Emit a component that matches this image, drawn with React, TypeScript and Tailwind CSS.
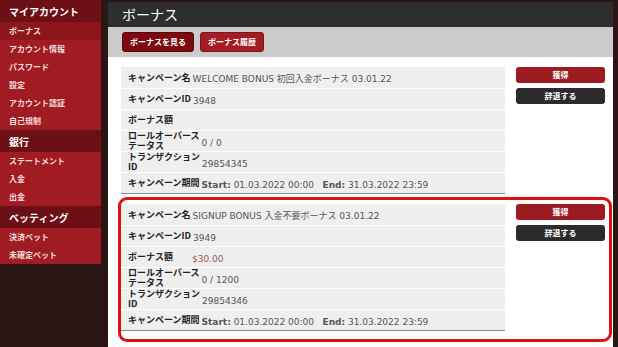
import React from 'react'

type Row = { label: React.ReactNode; value: React.ReactNode }

const jp = "font-['Noto_Sans_CJK_JP',sans-serif]"
const val = "font-['DejaVu_Sans','Noto_Sans_CJK_JP',sans-serif]"

const sideGroups = [
  { title: 'マイアカウント', items: ['ボーナス', 'アカウント情報', 'パスワード', '設定', 'アカウント認証', '自己規制'] },
  { title: '銀行', items: ['ステートメント', '入金', '出金'] },
  { title: 'ベッティング', items: ['決済ベット', '未確定ベット'] },
]

function Period() {
  return (
    <span>
      <b>Start:</b> 01.03.2022 00:00&nbsp;&nbsp; <b>End:</b> 31.03.2022 23:59
    </span>
  )
}

function makeRows(name: string, id: string, amount: string, rollover: string, tx: string): Row[] {
  return [
    { label: 'キャンペーン名', value: name },
    { label: 'キャンペーンID', value: id },
    { label: 'ボーナス額', value: <span className="text-[#a3535c]">{amount}</span> },
    { label: <>ロールオーバース<br />テータス</>, value: rollover },
    { label: <>トランザクション<br />ID</>, value: tx },
    { label: 'キャンペーン期間', value: <Period /> },
  ]
}

function BonusCard({ rows }: { rows: Row[] }) {
  return (
    <div className="flex items-start">
      <div className="w-[384px] border-b border-[#8a8a8a]">
        {rows.map((r, i) => (
          <div
            key={i}
            className={`flex h-[21px] items-center bg-[#efefef] pl-[7px] ${i > 0 ? 'border-t border-white' : ''}`}
          >
            <div className={`${jp} min-w-[62px] whitespace-nowrap text-[9px] font-bold leading-[10px] text-[#222]`}>
              {r.label}
            </div>
            <div className={`${val} ml-[2px] whitespace-nowrap pt-[3px] text-[9px] leading-[12px] text-[#555]`}>
              {r.value}
            </div>
          </div>
        ))}
      </div>
      <div className="ml-[11px] flex w-[89px] flex-col gap-[5px]">
        <button className={`${jp} h-[16px] rounded-[3px] bg-[#9b1b20] text-[8px] font-bold text-white`}>獲得</button>
        <button className={`${jp} h-[16px] rounded-[3px] bg-[#2b2b2b] text-[8px] font-bold text-white`}>辞退する</button>
      </div>
    </div>
  )
}

export default function App() {
  return (
    <div className={`${jp} flex h-[347px] w-[618px] gap-[7px] overflow-hidden bg-[#2a1614]`}>
      {/* サイドバー */}
      <div className="w-[101px] self-start bg-[#a01c22]">
        {sideGroups.map((g) => (
          <div key={g.title}>
            <div className="flex h-[22px] items-center bg-[#6c1015] pl-[9px] text-[10px] font-bold text-white">
              {g.title}
            </div>
            {g.items.map((it) => (
              <div
                key={it}
                className={`flex h-[18px] items-center pl-[9px] text-[8px] font-bold text-[#f5dede] ${
                  it === 'ボーナス' ? 'bg-[#8c161b]' : ''
                }`}
              >
                {it}
              </div>
            ))}
          </div>
        ))}
      </div>

      {/* メイン */}
      <div className="flex w-[505px] flex-col">
        <div className="mt-[2px] flex h-[25px] items-center bg-[#2e2e2e] pl-[14px] text-[14px] text-white">ボーナス</div>
        <div className="flex h-[30px] items-center gap-[6px] bg-[#cbcbcb] pl-[14px]">
          <button className="h-[20px] rounded-[3px] border border-[#5a0609] bg-[#7c0a0f] px-[7px] text-[8px] font-bold text-white">
            ボーナスを見る
          </button>
          <button className="h-[20px] rounded-[3px] border border-[#7e1419] bg-[#a51c22] px-[7px] text-[8px] font-bold text-white">
            ボーナス履歴
          </button>
        </div>
        <div className="flex-1 bg-white pl-[13px] pr-[8px] pt-[10px]">
          <BonusCard rows={makeRows('WELCOME BONUS 初回入金ボーナス 03.01.22', '3948', '', '0 / 0', '29854345')} />
          <div className="-ml-[3px] -mr-[7px] mt-[3px] rounded-[9px] border-[3px] border-[#e01010] pb-[8px] pr-[4px] pt-[4px]">
            <BonusCard rows={makeRows('SIGNUP BONUS 入金不要ボーナス 03.01.22', '3949', '$30.00', '0 / 1200', '29854346')} />
          </div>
        </div>
      </div>
    </div>
  )
}
